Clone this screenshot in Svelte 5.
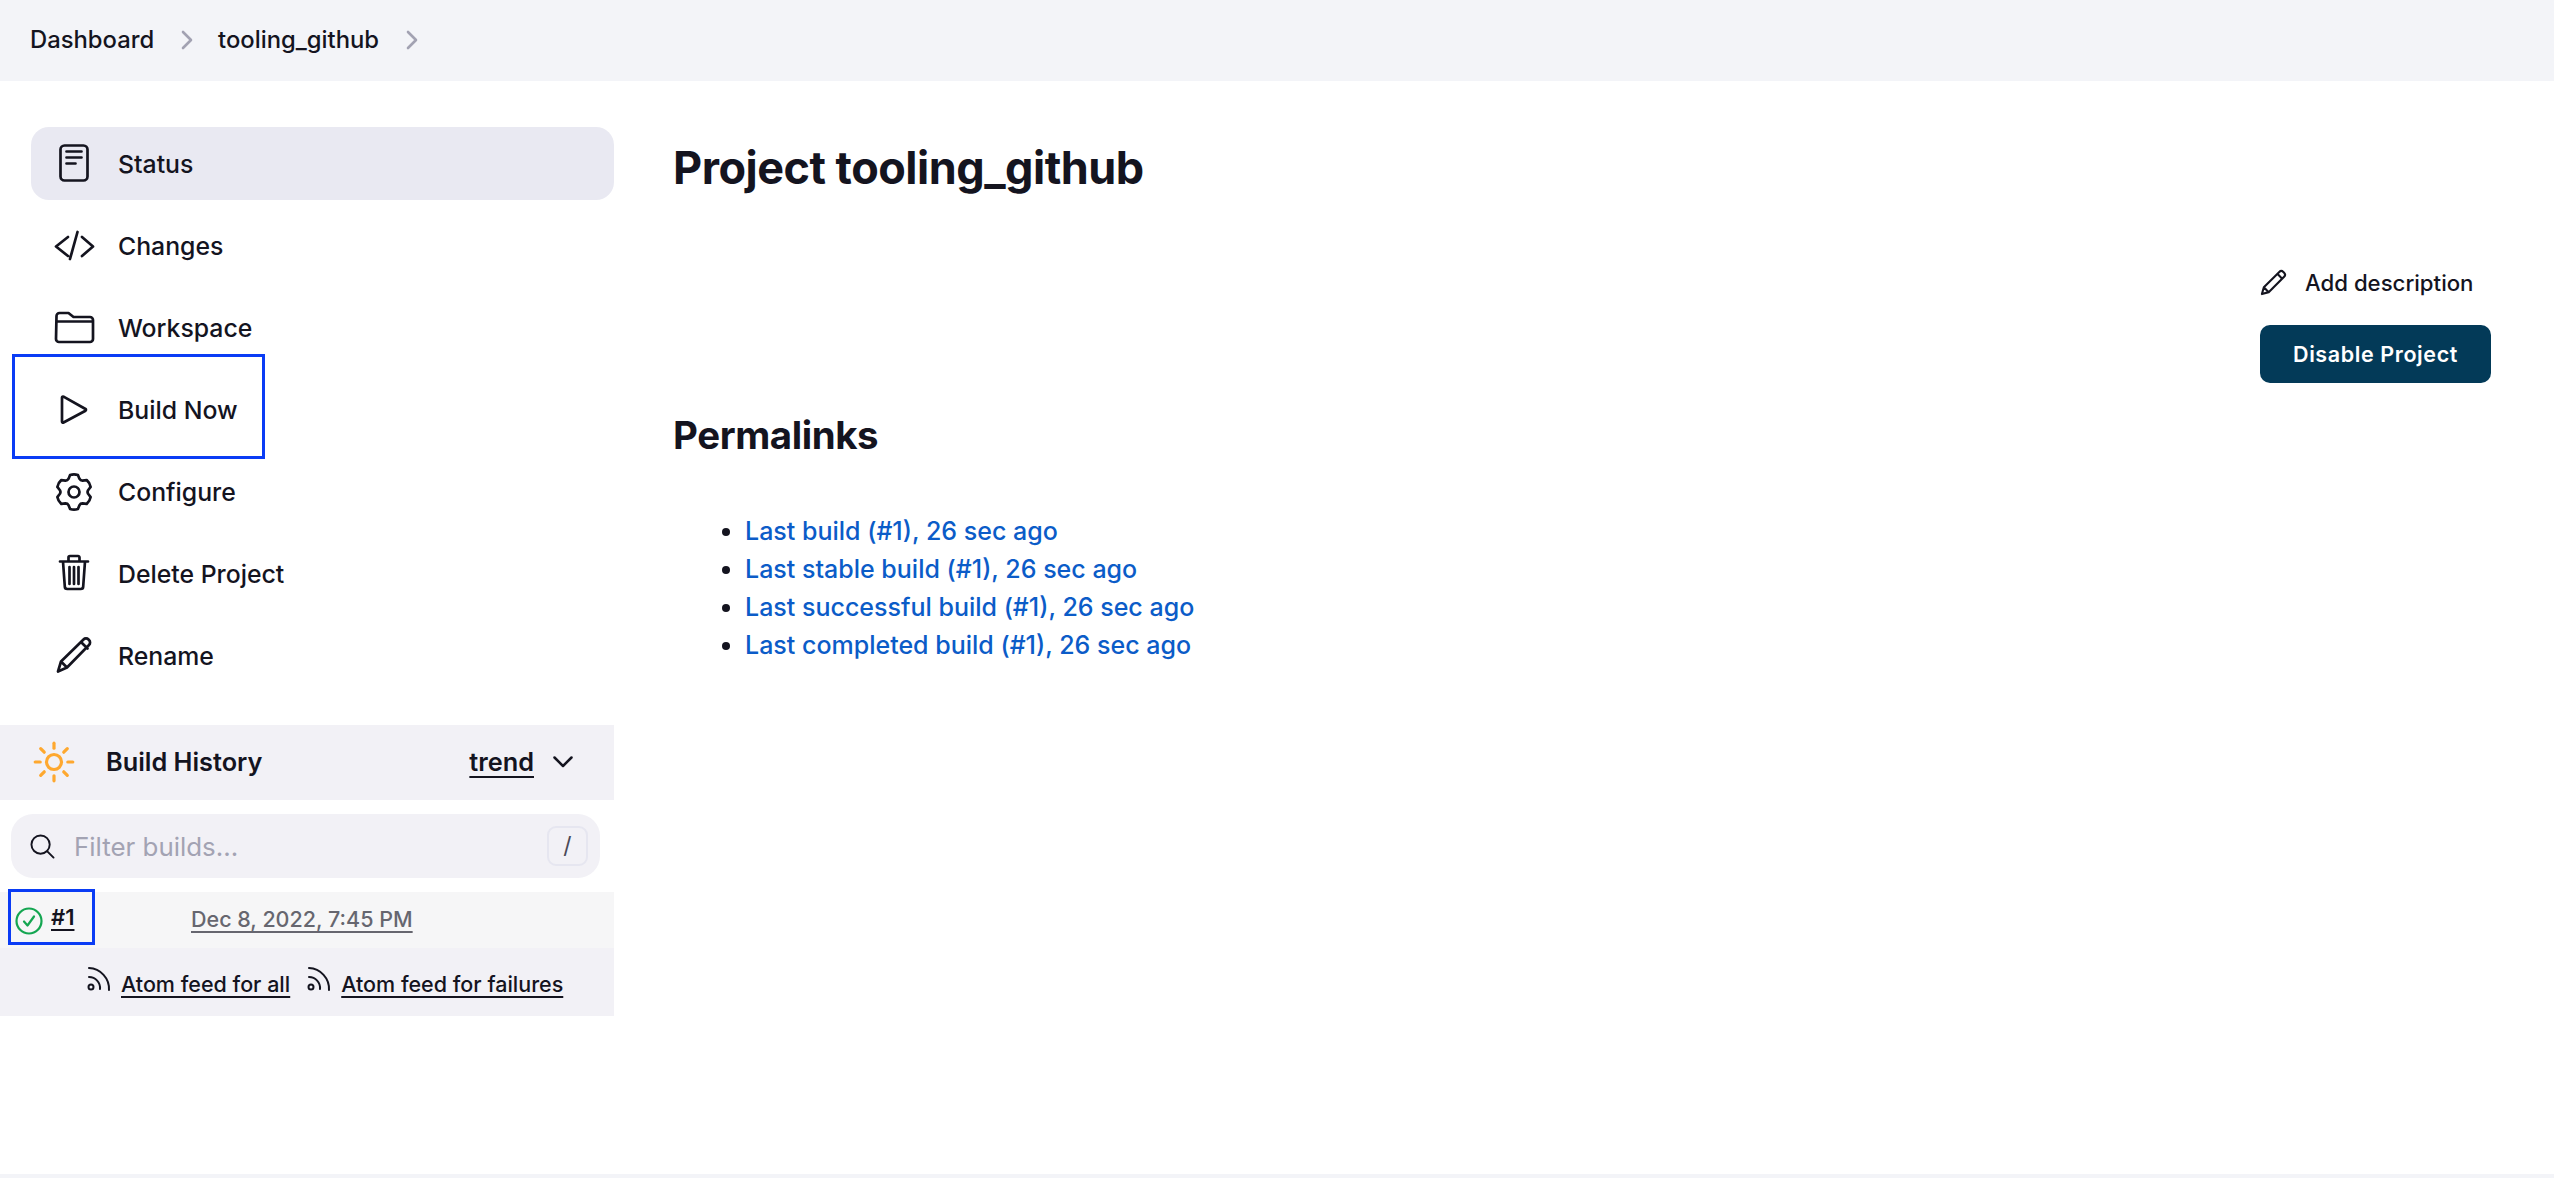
<script>
  function gearPath() {
    const cx = 24, cy = 22, R = 17.6;
    const rad = (d) => (d * Math.PI) / 180;
    const p = (a, q) => `${(cx + q * Math.cos(rad(a))).toFixed(2)} ${(cy + q * Math.sin(rad(a))).toFixed(2)}`;
    let d = "";
    for (let i = 0; i < 6; i++) {
      const a = -90 + i * 60;
      d += (i === 0 ? "M" : "L") + p(a - 13, R - 0.2);
      d += " Q" + p(a, R + 0.8) + " " + p(a + 13, R - 0.2);
      d += " L" + p(a + 23, R - 3.4);
      d += " Q" + p(a + 30, R - 4.6) + " " + p(a + 37, R - 3.4) + " ";
    }
    return d + "Z";
  }
  const gear = gearPath();
  const rays = [0, 45, 90, 135, 180, 225, 270, 315];
  const links = [
    "Last build (#1), 26 sec ago",
    "Last stable build (#1), 26 sec ago",
    "Last successful build (#1), 26 sec ago",
    "Last completed build (#1), 26 sec ago"
  ];
</script>

<div class="page">
  <header class="crumbs">
    <span class="crumb">Dashboard</span>
    <svg class="sep first-sep" viewBox="0 0 12 20"><path d="M2 2l8 8-8 8" /></svg>
    <span class="crumb">tooling_github</span>
    <svg class="sep" viewBox="0 0 12 20"><path d="M2 2l8 8-8 8" /></svg>
  </header>

  <div class="body">
    <aside class="side">
      <nav class="nav">
        <a class="item active">
          <svg class="ico" viewBox="0 0 48 44"><rect x="10.500" y="3.500" width="27" height="35" rx="4" /><path d="M16.500 9.500h15M16.500 15.500h15M16.500 21.500h9" /></svg>
          Status
        </a>
        <a class="item">
          <svg class="ico" viewBox="0 0 48 44"><path d="M18 13L6 22.500 18 32M27.500 8L20 35M32 13l11 9.500L32 32" /></svg>
          Changes
        </a>
        <a class="item">
          <svg class="ico" viewBox="0 0 48 44"><path d="M6.500 10a3 3 0 0 1 3-3h9l5 4h16.500a3 3 0 0 1 3 3v19a3 3 0 0 1-3 3h-31a3 3 0 0 1-3-3zM6.500 15.500h36" /></svg>
          Workspace
        </a>
        <a class="item marked">
          <svg class="ico" viewBox="0 0 48 44"><path d="M12 9.500a1 1 0 0 1 1.500-.8L35.500 21a1 1 0 0 1 0 1.700L13.500 34.500a1 1 0 0 1-1.500-.9z" /></svg>
          Build Now
        </a>
        <a class="item">
          <svg class="ico" viewBox="0 0 48 44"><path d={gear} /><circle cx="24" cy="22" r="5.500" /></svg>
          Configure
        </a>
        <a class="item">
          <svg class="ico" viewBox="0 0 48 44"><path d="M10 9.500h28M18.500 9.500V5.500a1.500 1.500 0 0 1 1.500-1.500h8a1.500 1.500 0 0 1 1.500 1.500v4M13 9.500l1.800 25a2.500 2.500 0 0 0 2.500 2.500h13.400a2.500 2.500 0 0 0 2.500-2.500l1.800-25M19.500 15v17M24 15v17M28.500 15v17" /></svg>
          Delete Project
        </a>
        <a class="item">
          <svg class="ico" viewBox="0 0 48 44"><path d="M8 37.500l3-10L33.500 5.500a3.500 3.500 0 0 1 5 0l.5.500a3.500 3.500 0 0 1 0 5L17 33.500zM11 27.500l6 6M31 8l6.500 6.500" /></svg>
          Rename
        </a>
      </nav>

      <section class="history">
        <div class="hist-head">
          <svg class="sun" viewBox="0 0 48 48">
            <circle cx="24" cy="24" r="7.500" />
            {#each rays as a}
              <path d="M24 5.200v5" transform="rotate({a} 24 24)" />
            {/each}
          </svg>
          <span class="hist-title">Build History</span>
          <a class="trend">trend</a>
          <svg class="chev" viewBox="0 0 20 12"><path d="M1.500 1.500L10 10l8.500-8.500" /></svg>
        </div>

        <div class="search">
          <svg class="mag" viewBox="0 0 26 26"><circle cx="11" cy="11" r="9.500" /><path d="M18 18l6.500 6.500" /></svg>
          <span class="placeholder">Filter builds...</span>
          <kbd class="key">/</kbd>
        </div>

        <div class="build">
          <span class="mark">
            <svg class="ok" viewBox="0 0 28 28"><circle cx="14" cy="14" r="12.500" /><path d="M9 14.500l3.500 4 6.500-9" /></svg>
            <a class="num">#1</a>
          </span>
          <a class="date">Dec 8, 2022, 7:45 PM</a>
        </div>

        <div class="feeds">
          <svg class="rss" viewBox="0 0 24 26"><circle cx="4" cy="21" r="2.500" /><path d="M2 11a11 11 0 0 1 11 12M2 2a21 21 0 0 1 20 22" /></svg>
          <a class="feed first">Atom feed for all</a>
          <svg class="rss" viewBox="0 0 24 26"><circle cx="4" cy="21" r="2.500" /><path d="M2 11a11 11 0 0 1 11 12M2 2a21 21 0 0 1 20 22" /></svg>
          <a class="feed">Atom feed for failures</a>
        </div>
      </section>
    </aside>

    <main class="main">
      <h1>Project tooling_github</h1>
      <div class="actions">
        <a class="describe">
          <svg class="pen" viewBox="0 0 28 28"><path d="M2 26l2-7L20 3a3 3 0 0 1 4.200 0l.8.800a3 3 0 0 1 0 4.200L9 24zM4 19l5 5M18 5l5 5" /></svg>
          Add description
        </a>
        <button class="disable">Disable Project</button>
      </div>
      <h2>Permalinks</h2>
      <ul class="links">
        {#each links as l}
          <li><a>{l}</a></li>
        {/each}
      </ul>
    </main>
  </div>
  <div class="strip"></div>
</div>

<style>
  :global(body) { margin: 0; background: #fff; }
  .page {
    height: 1178px;
    display: flex;
    flex-direction: column;
    font-family: Inter, "Noto Sans", sans-serif;
    color: #14141f;
    overflow: hidden;
  }
  .crumbs {
    height: 81px;
    flex: none;
    box-sizing: border-box;
    padding: 0 0 2px 30px;
    background: #f3f4f8;
    display: flex;
    align-items: center;
    font-size: 23.800px;
    font-weight: 500;
  }
  .sep { width: 12px; height: 20px; margin: 0 27px; fill: none; stroke: #a2a2b2; stroke-width: 2.600; stroke-linecap: round; stroke-linejoin: round; }
  .first-sep { margin-right: 25px; }
  .body { flex: 1; display: flex; min-height: 0; }
  .side { width: 614px; flex: none; padding-top: 46px; }
  .nav { display: flex; flex-direction: column; gap: 9px; padding-left: 31px; }
  .item {
    position: relative;
    height: 73px;
    display: flex;
    align-items: center;
    gap: 20px;
    padding-left: 19px;
    border-radius: 18px;
    font-size: 24.800px;
    font-weight: 500;
  }
  .item.active { background: #e9e9f2; }
  .marked::after {
    content: "";
    position: absolute;
    left: -19px;
    top: -19px;
    width: 247px;
    height: 99px;
    border: 3px solid #0a3cf5;
  }
  .ico { width: 48px; height: 44px; flex: none; fill: none; stroke: #14141f; stroke-width: 2.700; stroke-linecap: round; stroke-linejoin: round; }
  .history { margin-top: 33px; }
  .hist-head {
    height: 75px;
    box-sizing: border-box;
    padding: 0 0 2px 30px;
    background: #f2f1f6;
    display: flex;
    align-items: center;
    font-size: 25.300px;
    font-weight: 600;
  }
  .sun { width: 48px; height: 48px; flex: none; fill: none; stroke: #fea82f; stroke-width: 3.200; stroke-linecap: round; }
  .hist-title { margin-left: 28px; flex: 1; }
  .trend { text-decoration: underline; text-underline-offset: 5px; text-decoration-thickness: 2px; }
  .chev { width: 20px; height: 12px; margin: 0 41px 0 19px; fill: none; stroke: #14141f; stroke-width: 2.500; stroke-linecap: round; stroke-linejoin: round; }
  .search {
    height: 64px;
    margin: 14px 14px 14px 11px;
    border-radius: 22px;
    background: #f2f1f6;
    display: flex;
    align-items: center;
    padding: 0 12px 0 19px;
  }
  .mag { width: 25px; height: 25px; flex: none; fill: none; stroke: #14141f; stroke-width: 2px; stroke-linecap: round; }
  .placeholder { flex: 1; margin-left: 19px; font-size: 25.900px; font-weight: 400; color: #a3a3b3; }
  .key {
    width: 41px;
    height: 40px;
    box-sizing: border-box;
    border: 2px solid #e6e6f0;
    border-radius: 9px;
    display: flex;
    align-items: center;
    justify-content: center;
    font-family: Inter, sans-serif;
    font-size: 23px;
    color: #4a4a58;
  }
  .build {
    position: relative;
    height: 56px;
    padding-bottom: 2px;
    box-sizing: border-box;
    background: #f6f6f7;
    display: flex;
    align-items: center;
    font-size: 22px;
    font-weight: 500;
  }
  .mark {
    position: absolute;
    left: 8px;
    top: -3px;
    width: 87px;
    height: 56px;
    box-sizing: border-box;
    border: 3px solid #0a3cf5;
    display: flex;
    align-items: center;
    padding-left: 4px;
    gap: 8px;
  }
  .ok { width: 28px; height: 28px; flex: none; margin-top: 7px; fill: none; stroke: #14a651; stroke-width: 2.200; stroke-linecap: round; stroke-linejoin: round; }
  .num { text-decoration: underline; text-underline-offset: 4px; font-weight: 600; }
  .date { margin-left: 191px; color: #66666f; text-decoration: underline; text-underline-offset: 4px; font-size: 21.500px; }
  .feeds {
    height: 68px;
    box-sizing: border-box;
    padding: 3px 0 0 87px;
    background: #f2f1f6;
    display: flex;
    align-items: center;
    font-size: 21.500px;
    font-weight: 500;
  }
  .rss { width: 24px; height: 26px; flex: none; margin-top: -10px; fill: none; stroke: #14141f; stroke-width: 2px; stroke-linecap: round; }
  .feed { margin-left: 10px; text-decoration: underline; text-underline-offset: 4px; text-decoration-thickness: 2px; }
  .feed.first { margin-right: 17px; }
  .main { flex: 1; padding: 61px 63px 0 59px; display: flex; flex-direction: column; }
  h1 { margin: 0; font-size: 45px; line-height: 52px; font-weight: 700; letter-spacing: -0.500px; }
  .actions { margin-top: 69px; align-self: flex-end; width: 231px; display: flex; flex-direction: column; align-items: flex-start; gap: 24px; }
  .describe { height: 38px; display: flex; align-items: center; gap: 18px; font-size: 22.200px; font-weight: 500; white-space: nowrap; }
  .pen { width: 27px; height: 27px; flex: none; fill: none; stroke: #14141f; stroke-width: 2.200; stroke-linejoin: round; stroke-linecap: round; }
  .disable {
    width: 231px;
    height: 58px;
    border: 0;
    border-radius: 10px;
    background: #033a58;
    color: #fff;
    font: 600 21.500px Inter, sans-serif;
    letter-spacing: 0.600px;
  }
  h2 { margin: 30px 0 0; font-size: 38.400px; line-height: 44px; font-weight: 700; letter-spacing: -0.400px; }
  .links { margin: 55px 0 0; padding: 0 0 0 72px; font-size: 25px; line-height: 38px; font-weight: 500; }
  .links a { color: #0b5cc8; }
  .strip { height: 4px; flex: none; background: #f3f4f8; }
</style>
